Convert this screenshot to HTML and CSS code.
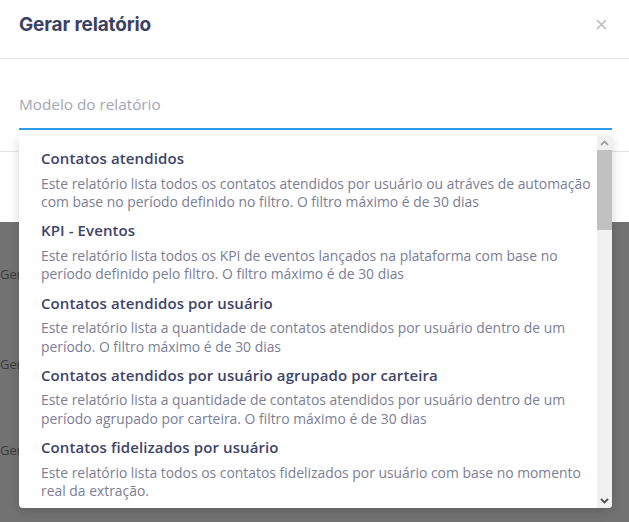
FILE: index.html
```html
<!DOCTYPE html>
<html lang="pt">
<head>
<meta charset="utf-8">
<link rel="stylesheet" href="styles.css">
</head>
<body>
<div class="page">
  <div class="modal">
    <div class="modal-header">
      <h1 class="title">Gerar relatório</h1>
      <span class="close">
        <svg width="11" height="11" viewBox="0 0 11 11"><path d="M1 1 L10 10 M10 1 L1 10" stroke="#b6b9c5" stroke-width="1.5" fill="none"/></svg>
      </span>
    </div>
    <div class="modal-body">
      <div class="field">
        <span class="placeholder">Modelo do relatório</span>
      </div>
    </div>
    <div class="modal-footer"></div>
  </div>
  <div class="behind">
    <div class="behind-row">Gerar</div>
    <div class="behind-row">Gerar</div>
    <div class="behind-row">Gerar</div>
  </div>

  <div class="dropdown">
    <div class="list">
      <div class="item">
        <div class="item-title">Contatos atendidos</div>
        <div class="item-desc">Este relatório lista todos os contatos atendidos por usuário ou atráves de automação com base no período definido no filtro. O filtro máximo é de 30 dias</div>
      </div>
      <div class="item">
        <div class="item-title">KPI - Eventos</div>
        <div class="item-desc">Este relatório lista todos os KPI de eventos lançados na plataforma com base no período definido pelo filtro. O filtro máximo é de 30 dias</div>
      </div>
      <div class="item">
        <div class="item-title">Contatos atendidos por usuário</div>
        <div class="item-desc">Este relatório lista a quantidade de contatos atendidos por usuário dentro de um período. O filtro máximo é de 30 dias</div>
      </div>
      <div class="item">
        <div class="item-title">Contatos atendidos por usuário agrupado por carteira</div>
        <div class="item-desc">Este relatório lista a quantidade de contatos atendidos por usuário dentro de um período agrupado por carteira. O filtro máximo é de 30 dias</div>
      </div>
      <div class="item">
        <div class="item-title">Contatos fidelizados por usuário</div>
        <div class="item-desc">Este relatório lista todos os contatos fidelizados por usuário com base no momento real da extração.</div>
      </div>
    </div>
    <div class="scrollbar">
      <div class="sb-btn">
        <svg width="9" height="6" viewBox="0 0 9 6"><path d="M1 5 L4.5 1.5 L8 5" fill="none" stroke="#a3a3a3" stroke-width="1.8"/></svg>
      </div>
      <div class="sb-track">
        <div class="sb-thumb"></div>
      </div>
      <div class="sb-btn">
        <svg width="9" height="6" viewBox="0 0 9 6"><path d="M1 1 L4.5 4.5 L8 1" fill="none" stroke="#505050" stroke-width="1.8"/></svg>
      </div>
    </div>
  </div>
</div>
</body>
</html>
```
FILE: styles.css
```css
* { box-sizing: border-box; }
html, body { margin: 0; padding: 0; }
body {
  width: 629px;
  height: 522px;
  overflow: hidden;
  background: #727272;
  font-family: "Open Sans", "Liberation Sans", sans-serif;
}
.page {
  position: relative;
  width: 629px;
  height: 522px;
}
.modal {
  background: #ffffff;
  height: 222px;
  display: flex;
  flex-direction: column;
}
.modal-header {
  height: 59px;
  border-bottom: 1px solid #e8e8ec;
  display: flex;
  align-items: center;
  justify-content: space-between;
  padding: 0 22px 0 19px;
}
.title {
  margin: 0;
  font-family: "Inter", "Open Sans", sans-serif;
  font-size: 19px;
  font-weight: 700;
  color: #3b4163;
  letter-spacing: -0.15px;
  position: relative;
  top: -5px;
}
.close {
  display: flex;
  position: relative;
  top: -5px;
}
.modal-body {
  height: 93px;
  padding: 28px 17px 0 19px;
  border-bottom: 1px solid #e4e4e8;
}
.field {
  height: 43px;
  border-bottom: 2px solid #2d9cef;
  display: flex;
  align-items: flex-start;
  padding-top: 7px;
}
.placeholder {
  font-size: 15.3px;
  color: #a2a6b6;
  font-weight: 400;
}
.modal-footer { flex: 1; }
.behind {
  display: flex;
  flex-direction: column;
  padding-top: 43px;
  gap: 72px;
  padding-left: 0;
}
.behind-row {
  font-size: 13px;
  color: #3c3c3c;
  height: 18px;
  line-height: 18px;
}
.behind-row:nth-child(3) { margin-top: -4px; }
.dropdown {
  position: absolute;
  left: 19px;
  top: 136px;
  width: 593px;
  height: 372px;
  background: #ffffff;
  border-radius: 4px;
  box-shadow: 0 3px 12px rgba(0,0,0,0.16);
  display: flex;
  overflow: hidden;
}
.list {
  flex: 1;
  padding: 12px 0 0 22px;
  display: flex;
  flex-direction: column;
  gap: 9px;
}
.item-title {
  font-size: 15px;
  font-weight: 600;
  color: #3e4466;
  line-height: 20px;
  letter-spacing: 0.1px;
}
.item-desc {
  margin-top: 6.5px;
  font-size: 13.9px;
  line-height: 18.4px;
  color: #7b7e94;
  padding-right: 2px;
}
.scrollbar {
  width: 15px;
  background: #f1f1f1;
  display: flex;
  flex-direction: column;
}
.sb-btn {
  height: 14px;
  display: flex;
  align-items: center;
  justify-content: center;
}
.sb-track {
  flex: 1;
}
.sb-thumb {
  height: 80px;
  background: #c1c1c1;
}
```
